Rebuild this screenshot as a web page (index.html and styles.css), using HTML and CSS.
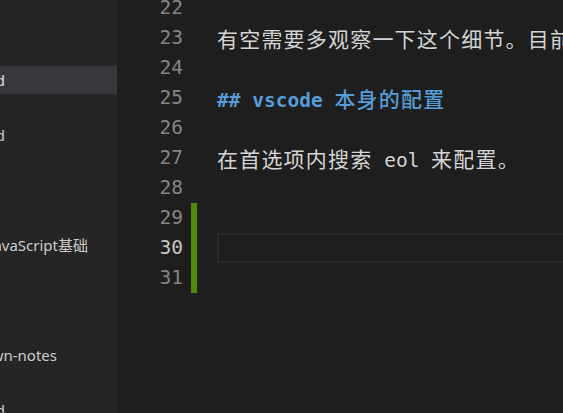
FILE: index.html
```html
<!DOCTYPE html>
<html lang="zh">
<head>
<meta charset="utf-8">
<title>vscode eol</title>
<link rel="stylesheet" href="styles.css">
</head>
<body>
<div class="app">
  <aside class="sidebar">
    <ul class="tree">
      <li class="row"></li>
      <li class="row"></li>
      <li class="row selected"><div class="label w5"><span>换行符.md</span></div></li>
      <li class="row"></li>
      <li class="row"><div class="label w5"><span>配置.md</span></div></li>
      <li class="row"></li>
      <li class="row"></li>
      <li class="row"></li>
      <li class="row"><div class="label w88"><span>02-JavaScript基础</span></div></li>
      <li class="row"></li>
      <li class="row"></li>
      <li class="row"></li>
      <li class="row"><div class="label w57"><span>markdown-notes</span></div></li>
      <li class="row"></li>
      <li class="row"><div class="label w5"><span>README.md</span></div></li>
    </ul>
  </aside>
  <main class="editor">
    <div class="lines">
      <div class="line"><span class="ln">22</span><span class="mark"></span><span class="code"></span></div>
      <div class="line"><span class="ln">23</span><span class="mark"></span><span class="code"><span class="cjk">有空需要多观察一下这个细节。目前</span></span></div>
      <div class="line"><span class="ln">24</span><span class="mark"></span><span class="code"></span></div>
      <div class="line"><span class="ln">25</span><span class="mark"></span><span class="code heading">## vscode <span class="cjk">本身的配置</span></span></div>
      <div class="line"><span class="ln">26</span><span class="mark"></span><span class="code"></span></div>
      <div class="line"><span class="ln">27</span><span class="mark"></span><span class="code"><span class="cjk">在首选项内搜索</span> eol <span class="cjk">来配置。</span></span></div>
      <div class="line"><span class="ln">28</span><span class="mark"></span><span class="code"></span></div>
      <div class="line"><span class="ln">29</span><span class="mark added"></span><span class="code"></span></div>
      <div class="line current"><span class="ln">30</span><span class="mark added"></span><span class="code"></span></div>
      <div class="line"><span class="ln">31</span><span class="mark added"></span><span class="code"></span></div>
      <div class="line"><span class="ln"></span><span class="mark"></span><span class="code"></span></div>
    </div>
  </main>
</div>
</body>
</html>
```
FILE: styles.css
```css
* { box-sizing: border-box; }
html, body {
  margin: 0;
  padding: 0;
  width: 563px;
  height: 413px;
  overflow: hidden;
  background: #1e1e1e;
}
.app {
  display: flex;
  width: 563px;
  height: 413px;
  overflow: hidden;
}
.sidebar {
  width: 117px;
  flex: none;
  background: #252526;
  overflow: hidden;
}
.tree {
  list-style: none;
  margin: 0;
  padding: 11px 0 0 0;
  font-family: "Noto Sans", "Noto Sans CJK SC", sans-serif;
  font-size: 15px;
  color: #cccccc;
}
.row {
  height: 27.5px;
  display: flex;
  align-items: center;
}
.row.selected {
  background: #37373d;
  color: #e0e0e0;
}
.label {
  display: flex;
  justify-content: flex-end;
  overflow: visible;
  white-space: nowrap;
  flex: none;
}
.label span { flex: none; }
.w5 { width: 5px; }
.w57 { width: 57px; }
.w88 { width: 88px; }
.editor {
  flex: 1;
  background: #1e1e1e;
  overflow: hidden;
}
.lines {
  margin-top: -7px;
  font-family: "DejaVu Sans Mono", "Noto Sans CJK SC", monospace;
  font-size: 19.5px;
}
.line {
  display: grid;
  grid-template-columns: 66px 6px 1fr;
  column-gap: 8px;
  height: 30px;
  line-height: 30px;
}
.line .code { margin-left: 12px; }
.ln {
  text-align: right;
  color: #858585;
}
.current .ln { color: #c6c6c6; }
.mark { height: 30px; }
.mark.added { background: #4e8c0a; }
.code {
  color: #d4d4d4;
  white-space: nowrap;
  height: 30px;
}
.cjk {
  font-family: "Noto Sans CJK SC", sans-serif;
  font-size: 21px;
  font-weight: 400;
  letter-spacing: 1.2px;
}
.heading {
  color: #569cd6;
  font-weight: bold;
}
.heading .cjk { font-weight: 500; }
.current .code {
  border: 2px solid #282828;
  margin-right: -20px;
}
```
